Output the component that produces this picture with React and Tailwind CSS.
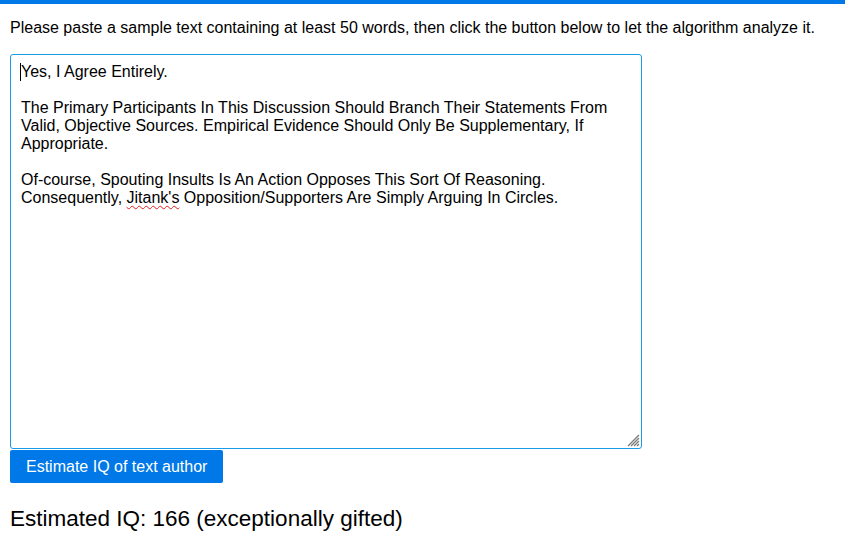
export default function App() {
  return (
    <div className="w-[845px] h-[542px] bg-white overflow-hidden" style={{ fontFamily: '"Liberation Sans", Arial, sans-serif' }}>
      <div className="h-[4px] bg-[#0078e7]" />
      <div className="px-[10px]">
        <p className="mt-[15px] text-[16px] leading-[18px] text-black">
          Please paste a sample text containing at least 50 words, then click the button below to let the algorithm analyze it.
        </p>
        <div className="relative mt-[17px] w-[632px] h-[395px] border border-[#1a9be8] rounded-[3px] pl-[10px] pr-[20px] pt-[8px] text-[16px] leading-[18px] text-black">
          <p className="relative">
            <span className="absolute left-[-1px] top-[0px] w-[1px] h-[18px] bg-black" />
            Yes, I Agree Entirely.
          </p>
          <p className="mt-[18px]">
            The Primary Participants In This Discussion Should Branch Their Statements From Valid, Objective Sources. Empirical Evidence Should Only Be Supplementary, If Appropriate.
          </p>
          <p className="mt-[18px]">
            Of-course, Spouting Insults Is An Action Opposes This Sort Of Reasoning. Consequently, <span className="underline decoration-wavy decoration-[#e02020] decoration-1 underline-offset-2">Jitank's</span> Opposition/Supporters Are Simply Arguing In Circles.
          </p>
          <svg className="absolute right-[1px] bottom-[1px]" width="14" height="14" viewBox="0 0 14 14">
            <path d="M13 2 L2 13 M13 5 L5 13 M13 8 L8 13 M13 11 L11 13" stroke="#7a7a7a" strokeWidth="1.3" fill="none" />
          </svg>
        </div>
        <button className="mt-[1px] h-[33px] px-[16px] bg-[#0078e7] text-white text-[16px] rounded-[2px]">
          Estimate IQ of text author
        </button>
        <p className="mt-[23px] text-[22.5px] leading-[25px] text-black">
          Estimated IQ: 166 (exceptionally gifted)
        </p>
      </div>
    </div>
  );
}
